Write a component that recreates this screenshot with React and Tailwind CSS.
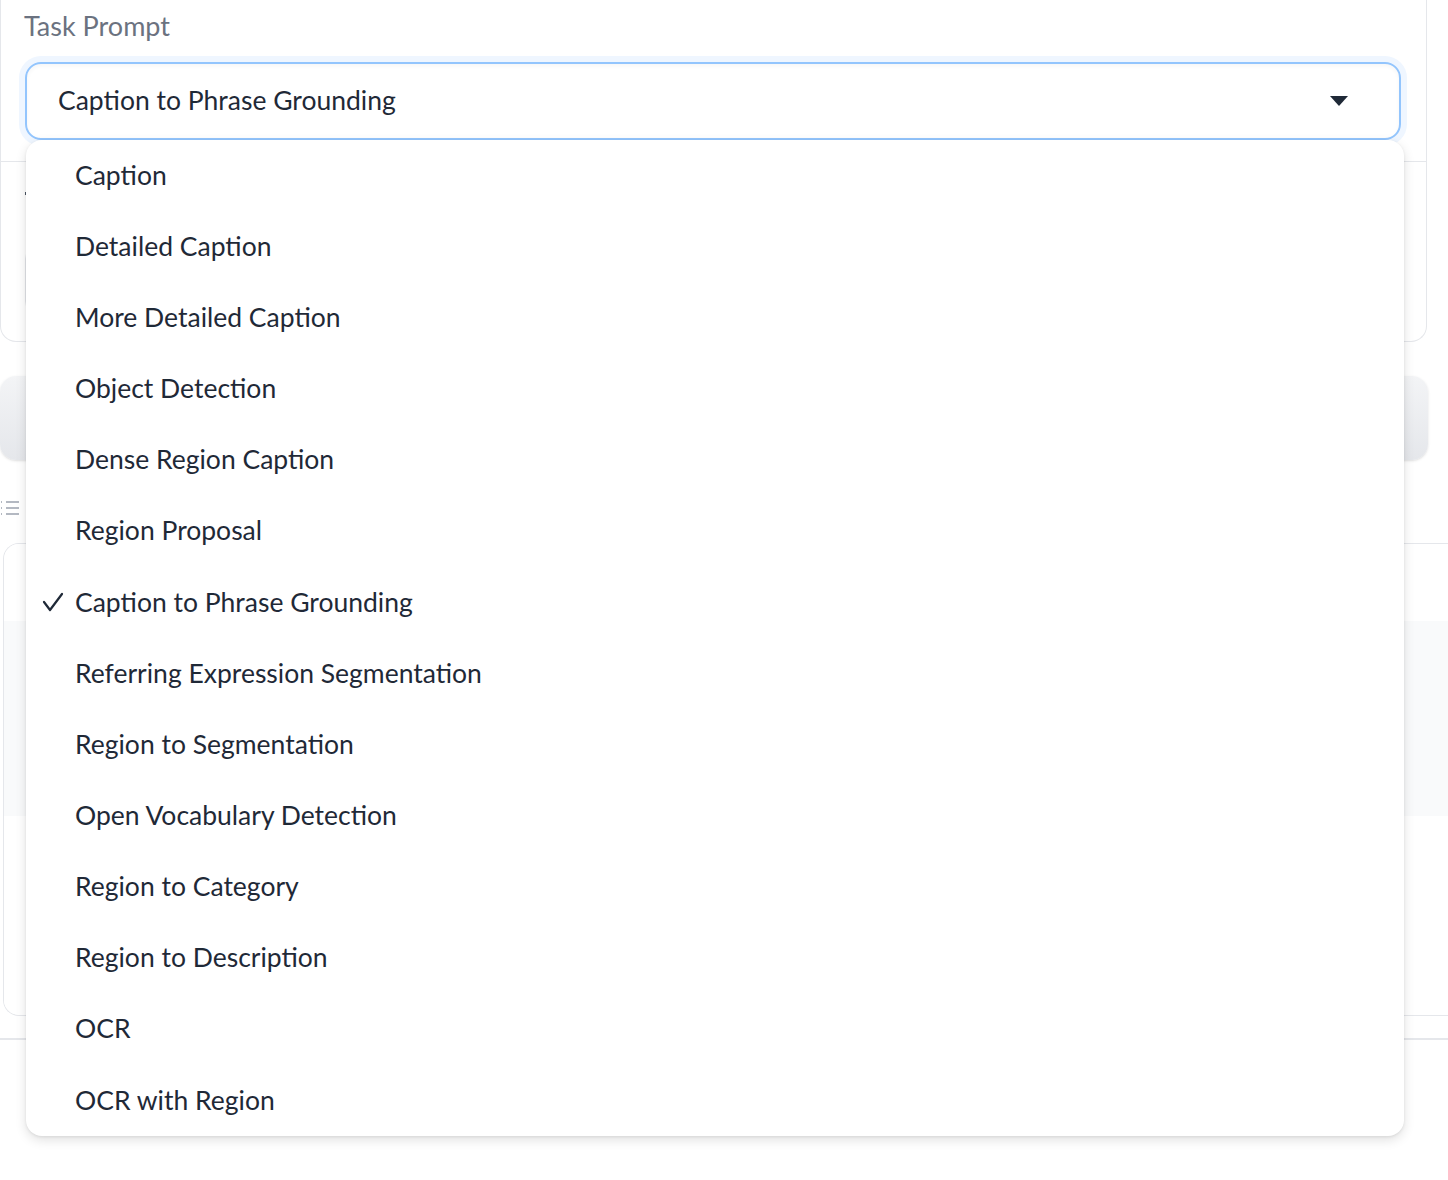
import { useState } from 'react'

const tasks = [
  'Caption',
  'Detailed Caption',
  'More Detailed Caption',
  'Object Detection',
  'Dense Region Caption',
  'Region Proposal',
  'Caption to Phrase Grounding',
  'Referring Expression Segmentation',
  'Region to Segmentation',
  'Open Vocabulary Detection',
  'Region to Category',
  'Region to Description',
  'OCR',
  'OCR with Region',
]

const ListIcon = () => (
  <svg width="20" height="16" viewBox="0 0 20 16" fill="none" stroke="#9ca3af" strokeWidth="1.6">
    <path d="M1 2h1M1 8h1M1 14h1M6 2h13M6 8h13M6 14h13" />
  </svg>
)

const Check = () => (
  <svg width="22" height="20" viewBox="0 0 22 20" fill="none" stroke="#1f2937" strokeWidth="2.2" strokeLinecap="round" strokeLinejoin="round">
    <path d="M2 10l6 8L20 2" />
  </svg>
)

const App = () => {
  const [selected, setSelected] = useState('Caption to Phrase Grounding')

  return (
    <div
      className="relative w-[1448px] h-[1180px] overflow-hidden bg-white"
      style={{ fontFamily: 'Lato, "Open Sans", sans-serif' }}
    >
      {/* background form */}
      <div className="w-[1427px] h-[342px] border-r border-b border-l border-[#e5e7eb] rounded-b-[16px] flex flex-col">
        <div className="h-[162px] border-b border-[#e5e7eb] pl-[23px] pr-[24px] pt-[6px]">
          <div className="text-[27px] text-[#6b7280]">Task Prompt</div>
          <div className="mt-[15px] ml-[1px] w-[1376px] h-[78px] rounded-[16px] border-2 border-[#93c5fd] ring-[6px] ring-[#eff6ff] shadow-[inset_0_2px_4px_rgba(0,0,0,0.04)] flex items-center justify-between pl-[31px] pr-[50px]">
            <span className="text-[26.5px] text-[#1f2937]">{selected}</span>
            <svg width="20" height="10" viewBox="0 0 20 10">
              <path d="M1 0h18l-9 10z" fill="#1f2937" />
            </svg>
          </div>
        </div>
        <div className="px-[24px] pt-[30px]">
          <div className="h-[3px] w-[3px] bg-[#4b5563]"></div>
          <div className="mt-[50px] h-[70px] rounded-[14px] border border-[#e5e7eb] bg-white"></div>
        </div>
      </div>

      <div className="mt-[34px] w-[1428px] h-[84px] rounded-[16px] bg-gradient-to-b from-[#f3f4f6] to-[#e5e7eb] shadow-sm"></div>

      <div className="mt-[40px] h-[16px] flex">
        <ListIcon />
      </div>

      <div className="mt-[27px] ml-[3px] h-[473px] border border-r-0 border-[#e5e7eb] rounded-l-[16px] flex flex-col overflow-hidden">
        <div className="h-[77px] bg-white shadow-[0_2px_3px_rgba(0,0,0,0.05)]"></div>
        <div className="h-[195px] bg-[#f9fafb]"></div>
        <div className="flex-1 bg-white"></div>
      </div>

      <div className="mt-[22px] border-t-2 border-[#e5e7eb]"></div>

      {/* open dropdown */}
      <ul className="absolute left-[26px] top-[140px] w-[1378px] h-[996px] bg-white rounded-[16px] shadow-[0_4px_12px_rgba(0,0,0,0.12),0_1px_3px_rgba(0,0,0,0.08)] flex flex-col">
        {tasks.map((t) => (
          <li
            key={t}
            onClick={() => setSelected(t)}
            className="h-[71.2px] flex items-center text-[26.5px] text-[#1f2937] cursor-pointer"
          >
            <span className="w-[49px] pl-[16px] flex items-center">{t === selected ? <Check /> : null}</span>
            <span>{t}</span>
          </li>
        ))}
      </ul>
    </div>
  )
}

export default App
